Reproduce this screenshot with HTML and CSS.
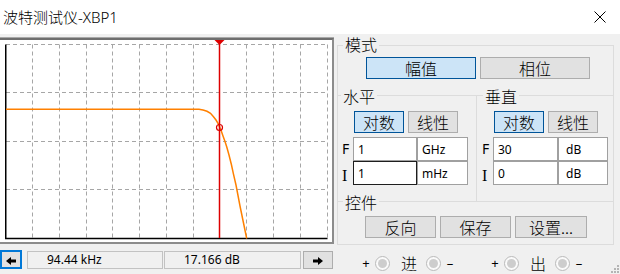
FILE: index.html
```
<!DOCTYPE html>
<html>
<head>
<meta charset="utf-8">
<title>波特测试仪-XBP1</title>
<link rel="stylesheet" href="styles.css">
</head>
<body>
<div class="window">

  <!-- title bar -->
  <div class="titlebar">
    <span class="title">波特测试仪-XBP1</span>
    <svg class="close" width="12" height="12" viewBox="0 0 12 12"><path d="M0.5 0.5L11.5 11.5M11.5 0.5L0.5 11.5" stroke="#000" stroke-width="1"/></svg>
  </div>

  <div class="main">

    <!-- plot screen + cursor readout -->
    <div class="scope">
      <div class="screen">
        <svg width="332" height="202" viewBox="0 0 332 202">
          <g stroke="#a6a6a6" stroke-width="1" stroke-dasharray="4 3" fill="none">
            <path d="M32.5 4.5V198M59.5 4.5V198M86.5 4.5V198M112.5 4.5V198M139.5 4.5V198M166.5 4.5V198M193.5 4.5V198M246.5 4.5V198M273.5 4.5V198M300.5 4.5V198M327.5 4.5V198"/>
            <path d="M6 4.5H327.5M6 52.5H327.5M6 101.5H327.5M6 149.5H327.5"/>
          </g>
          <path d="M5.75 4.5V198.5H327.5" stroke="#000" stroke-width="1.5" fill="none"/>
          <polyline points="6,69.3 199,69.3 203,70 207,71.3 210.5,73.3 213.3,76.5 216,80 218.3,83.8 219.8,87.5 221.3,91 223,96 225,101.5 226.7,106.7 229,115 231.5,125 233.3,133.3 236,145 240,166 243.5,183 246.7,198.5" stroke="#ff8000" stroke-width="1.5" fill="none"/>
          <line x1="219.5" y1="0" x2="219.5" y2="198" stroke="#dd0000" stroke-width="1.5"/>
          <polygon points="214.5,0 224.5,0 219.5,5" fill="#dd0000"/>
          <circle cx="219.5" cy="87.5" r="3" stroke="#dd0000" stroke-width="1.2" fill="none"/>
        </svg>
      </div>
      <div class="nav">
        <button class="navbtn prev"><svg width="10" height="8" viewBox="0 0 10 8"><path d="M10 2.5H5V0L0 4L5 8V5.5H10Z"/></svg></button>
        <div class="readout">94.44 kHz</div>
        <div class="readout second">17.166 dB</div>
        <button class="navbtn next"><svg width="10" height="8" viewBox="0 0 10 8"><path d="M0 2.5H5V0L10 4L5 8V5.5H0Z"/></svg></button>
      </div>
    </div>

    <!-- settings -->
    <div class="side">
      <div class="panel">
        <div class="sec mode">
          <span class="legend">模式</span>
          <div class="btnrow">
            <button class="btn on wide">幅值</button>
            <button class="btn wide">相位</button>
          </div>
        </div>

        <div class="sec axes">
          <div class="axis horiz">
            <span class="legend">水平</span>
            <div class="btnrow">
              <button class="btn on">对数</button>
              <button class="btn">线性</button>
            </div>
            <div class="fields">
              <span class="fl">F</span><input class="val" value="1"><input class="unit" value="GHz">
              <span class="fl il">I</span><input class="val focus" value="1"><input class="unit" value="mHz">
            </div>
          </div>
          <div class="axis vert">
            <span class="legend">垂直</span>
            <div class="btnrow">
              <button class="btn on">对数</button>
              <button class="btn">线性</button>
            </div>
            <div class="fields">
              <span class="fl">F</span><input class="val" value="30"><input class="unit db" value="dB">
              <span class="fl il">I</span><input class="val" value="0"><input class="unit db" value="dB">
            </div>
          </div>
        </div>

        <div class="sec ctrl">
          <span class="legend">控件</span>
          <div class="btnrow">
            <button class="btn mid">反向</button>
            <button class="btn mid">保存</button>
            <button class="btn mid last">设置...</button>
          </div>
        </div>
      </div>

      <!-- in / out terminals -->
      <div class="io">
        <div class="port">
          <span class="sign">+</span>
          <svg class="led" viewBox="0 0 15 15"><circle cx="7.5" cy="7.5" r="7" fill="#fafafa" stroke="#bababa"/><circle cx="7.5" cy="7.5" r="4.5" fill="#cdcdcd"/></svg>
          <span class="pname">进</span>
          <svg class="led" viewBox="0 0 15 15"><circle cx="7.5" cy="7.5" r="7" fill="#fafafa" stroke="#bababa"/><circle cx="7.5" cy="7.5" r="4.5" fill="#cdcdcd"/></svg>
          <span class="sign">–</span>
        </div>
        <div class="port out">
          <span class="sign">+</span>
          <svg class="led" viewBox="0 0 15 15"><circle cx="7.5" cy="7.5" r="7" fill="#fafafa" stroke="#bababa"/><circle cx="7.5" cy="7.5" r="4.5" fill="#cdcdcd"/></svg>
          <span class="pname">出</span>
          <svg class="led" viewBox="0 0 15 15"><circle cx="7.5" cy="7.5" r="7" fill="#fafafa" stroke="#bababa"/><circle cx="7.5" cy="7.5" r="4.5" fill="#cdcdcd"/></svg>
          <span class="sign">–</span>
        </div>
      </div>
    </div>
  </div>

  <!-- resize grip in the corner -->
  <svg class="grip" width="10" height="10" viewBox="0 0 10 10" fill="#b4b4b4">
    <rect x="7" y="1" width="2" height="2"/><rect x="7" y="4" width="2" height="2"/><rect x="4" y="4" width="2" height="2"/>
    <rect x="7" y="7" width="2" height="2"/><rect x="4" y="7" width="2" height="2"/><rect x="1" y="7" width="2" height="2"/>
  </svg>
</div>
</body>
</html>
```

FILE: styles.css
```
/* bode plotter window */
* {
  box-sizing: border-box;
}

body {
  margin: 0;
  background: #f0f0f0;
  font-family: "Noto Sans", "Noto Sans CJK SC", sans-serif;
  color: #000;
}

.window {
  position: relative;
  width: 620px;
  height: 274px;
  overflow: hidden;
}

/* title bar */
.titlebar {
  display: flex;
  align-items: center;
  height: 34px;
  padding-left: 3px;
  background: #fff;
}

.title {
  font-size: 15px;
  font-weight: 300;
  line-height: 18px;
}

.close {
  margin-left: auto;
  margin-right: 14px;
}

.main {
  display: flex;
  padding-top: 3px;
}

/* plot ------------------------------------------ */
.scope {
  width: 334px;
}

.screen {
  margin-top: 1px;
  background: #fff;
  border-top: 2px solid #6e6e6e;
  border-right: 2px solid #8c8c8c;
  border-bottom: 2px solid #8c8c8c;
  box-shadow: 0 -1px 0 #a8a8a8;
}

.screen svg {
  display: block;
}

.nav {
  display: flex;
  align-items: flex-start;
  margin-top: 6px;
}

.navbtn {
  display: flex;
  align-items: center;
  justify-content: center;
  padding: 0;
  background: #e1e1e1;
  border: 1px solid #adadad;
}

.navbtn.prev {
  width: 22px;
  height: 19px;
  border: 2px solid #0078d7;
  padding-top: 3px;
}

.navbtn.next {
  width: 30px;
  height: 18px;
  margin-top: 1px;
  margin-left: 2px;
  padding-top: 1px;
}

.readout {
  width: 136px;
  height: 18px;
  margin-top: 1px;
  margin-left: 5px;
  padding-left: 19px;
  border: 1px solid #c2c2c2;
  font-size: 12px;
  line-height: 16px;
}

.readout.second {
  width: 137px;
  margin-left: 1px;
}

/* settings ---------------------------------------- */
.side {
  width: 277px;
  margin-left: 3px;
}

.panel {
  margin-top: 8px;
  border: 1px solid #dcdcdc;
}

.legend {
  display: block;
  width: max-content;
  height: 16px;
  margin-top: -8px;
  padding: 0 2px;
  background: #f0f0f0;
  font-family: "Noto Sans CJK SC", sans-serif;
  font-size: 16px;
  font-weight: 300;
  line-height: 16px;
}

.btnrow {
  display: flex;
  gap: 4px;
}

.btn {
  display: flex;
  align-items: center;
  justify-content: center;
  width: 50px;
  height: 22px;
  padding: 0;
  background: #e1e1e1;
  border: 1px solid #adadad;
  font-family: "Noto Sans CJK SC", sans-serif;
  font-size: 16px;
  font-weight: 300;
  line-height: 16px;
  color: #000;
}

.btn.on {
  background: #cce4f7;
  border-color: #005499;
}

.btn.wide {
  width: 110px;
}

.btn.mid {
  width: 71px;
}

.btn.last {
  width: 72px;
}

.mode {
  padding-bottom: 16px;
}

.mode .legend {
  margin-top: -10px;
  margin-left: 5px;
}

.mode .btnrow {
  margin-top: 5px;
  padding-left: 28px;
}

.axes {
  display: flex;
  border-top: 1px solid #dcdcdc;
}

.axis {
  padding-bottom: 16px;
}

.axis.horiz {
  width: 139px;
  border-right: 1px solid #dcdcdc;
}

.axis.vert {
  flex: 1;
}

.horiz .legend {
  margin-left: 3px;
}

.vert .legend {
  margin-left: 6px;
}

.axis .btnrow {
  margin-top: 7px;
  padding-left: 16px;
}

.vert .btnrow {
  padding-left: 17px;
}

.fields {
  display: grid;
  grid-template-columns: 11px 64px 51px;
  grid-auto-rows: 24px;
  margin-top: 4px;
  padding-left: 4px;
}

.vert .fields {
  grid-template-columns: 11px 65px 50px;
  padding-left: 5px;
}

.fl {
  font-size: 14px;
  line-height: 24px;
}

.fl.il {
  font-family: "Liberation Serif", serif;
  font-size: 16px;
  line-height: 30px;
}

.fields input {
  width: 100%;
  height: 24px;
  margin: 0;
  padding: 0 0 0 4px;
  border: 1px solid #a0a0a0;
  background: #fff;
  font-family: "Noto Sans", sans-serif;
  font-size: 12px;
  color: #000;
  outline: none;
}

.fields input.focus {
  border-color: #1e1e1e;
}

.fields input.unit {
  padding-left: 4px;
}

.fields input.db {
  padding-left: 7px;
}

.ctrl {
  border-top: 1px solid #dcdcdc;
  padding-bottom: 6px;
}

.ctrl .legend {
  margin-left: 5px;
}

.ctrl .btnrow {
  margin-top: 6px;
  padding-left: 27px;
}

/* terminals */
.io {
  display: flex;
  align-items: center;
  height: 18px;
  margin-top: 9px;
  padding-left: 25px;
}

.port {
  display: flex;
  align-items: center;
}

.port.out {
  margin-left: 37px;
}

.sign {
  width: 8px;
  text-align: center;
  font-size: 13px;
  line-height: 18px;
}

.led {
  width: 15px;
  height: 15px;
  margin: 0 5px;
}

.pname {
  width: 16px;
  margin: 0 4px 0 6px;
  font-family: "Noto Sans CJK SC", sans-serif;
  font-size: 16px;
  font-weight: 300;
  line-height: 18px;
  text-align: center;
}

.grip {
  position: absolute;
  right: 0;
  bottom: 0;
}
```
